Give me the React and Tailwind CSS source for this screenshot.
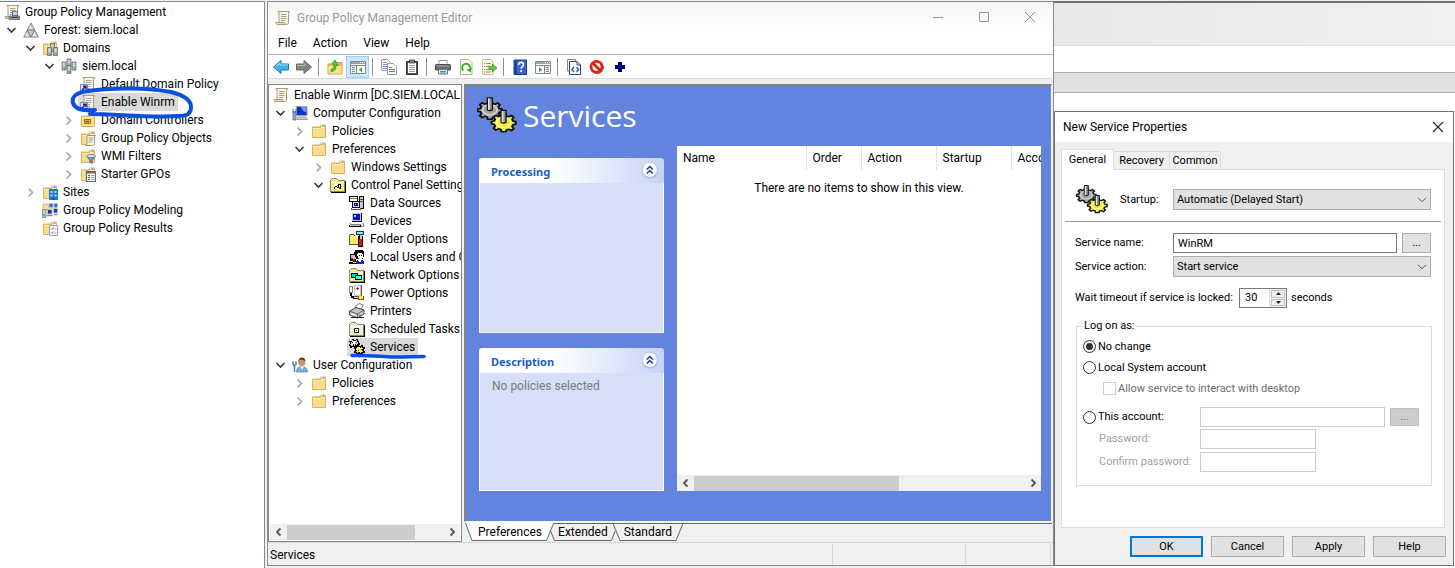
import React, { useState } from "react";

function Svg({ size = 16, box = 16, children, className = "", crisp = false }) {
  return (
    <svg
      width={size}
      height={size}
      viewBox={`0 0 ${box} ${box}`}
      className={`shrink-0 ${className}`}
      shapeRendering={crisp ? "crispEdges" : "auto"}
      fill="none"
      aria-hidden="true"
    >
      {children}
    </svg>
  );
}

/* ---------- tree icons ---------- */

const scrollShape = (
  <>
    <path d="M4 1.5h10.5c-.8.4-1 1-1 2V12c0 1.600-.5 2.500-2 2.500H2c1.300-.3 2-1 2-2.500V3c0-.8-.5-1.300-1.300-1.500z" fill="#fbf6e4" stroke="#a89c80" />
    <path d="M1 12.500h8.500c0 1 .5 1.800 1.500 2H2.500C1.500 14.500 1 13.700 1 12.500z" fill="#e9dcb4" stroke="#a89c80" />
    <path d="M6 4.500h5.500M6 6.500h5.500M6 8.500h5.500M6 10.500h4" stroke="#a8a294" />
    <path d="M13 2.500h2" stroke="#c9b67c" />
  </>
);

const ScrollIcon = () => <Svg>{scrollShape}</Svg>;

const ScrollLinkIcon = () => (
  <Svg>
    {scrollShape}
    <path d="M0 8h8v8H0z" fill="#e8ecff" />
    <path d="M.5 8.500h7v7h-7z" stroke="#7c8cc8" />
    <path d="M2 14l3.500-3.500M3 10.200h3v3" stroke="#10189c" strokeWidth="1.400" />
  </Svg>
);

const ConsoleIcon = () => (
  <Svg>
    {scrollShape}
    <path d="M8 7h6v5H8z" fill="#6d7f8f" />
    <path d="M9 8h4v3H9z" fill="#c7d4df" />
    <path d="M5 12h11v3.500H5z" fill="#8a949d" stroke="#4d565e" strokeWidth=".6" />
    <path d="M7 13.500h7" stroke="#3f474e" />
  </Svg>
);

const ForestIcon = () => (
  <Svg>
    <path d="M8 1l3.700 7H4.300zM4.300 8L8 15H.8zM11.700 8l3.600 7H8z" fill="#ececec" stroke="#777" strokeWidth=".9" strokeLinejoin="round" />
    <path d="M4.300 8h7.400L8 15z" fill="#c9c9c9" stroke="#777" strokeWidth=".9" strokeLinejoin="round" />
    <path d="M8 1l1 5.500L11.700 8M4.300 8l1 4.500L8 15M11.700 8l1 4.500 2.600 2.500" stroke="#999" strokeWidth=".6" />
  </Svg>
);

const folderShape = (
  <>
    <path d="M1 3.500h7.500l1-2H14c.5 0 1 .4 1 1V13H1z" fill="#e3bd63" />
    <path d="M10 2h4v1.500h-4z" fill="#fff" />
    <path d="M11.500 2h2v1h-2z" fill="#4a9be8" />
    <path d="M1 4h8.200l1-1H15v11.500H1z" fill="#fbdc8f" />
    <path d="M1.500 4.500h7.900l1-1h4.100v11h-13z" stroke="#dcb25a" />
    <path d="M2 5.500h7.600l1-1H14" stroke="#fff0c4" />
  </>
);

const FolderIcon = () => <Svg>{folderShape}</Svg>;

const server = (x, y) => (
  <>
    <path d={`M${x} ${y}h4v8h-4z`} fill="#a9b4ba" stroke="#566067" strokeWidth=".7" />
    <path d={`M${x + 0.8} ${y + 1.800}h2.400M${x + 0.8} ${y + 3.500}h2.400`} stroke="#eef2f4" strokeWidth=".9" />
    <path d={`M${x + 2} ${y + 5.800}h1.400v1.400h-1.400z`} fill="#25c425" />
  </>
);

const ServersIcon = () => (
  <Svg>
    {server(6, 1)}
    {server(1, 4)}
    {server(11, 4)}
    {server(6, 7.500)}
  </Svg>
);

const FolderServersIcon = () => (
  <Svg>
    {folderShape}
    {server(8.500, 3.500)}
    {server(5.500, 7.500)}
    {server(11.500, 7.500)}
  </Svg>
);

const FolderOuIcon = () => (
  <Svg>
    {folderShape}
    <path d="M4.500 7.500h6v4h-6z" fill="#d5a83c" stroke="#9c7317" />
    <path d="M6 9h3v1H6z" fill="#6d4f0c" />
  </Svg>
);

const FolderScrollIcon = () => (
  <Svg>
    {folderShape}
    <path d="M7 5.500h8.500c-.7.300-1 .7-1 1.500v6.500c0 1.200-.6 2-1.700 2H5.500c1-.3 1.500-.9 1.500-2z" fill="#fbf6e4" stroke="#988c6e" strokeWidth=".9" />
    <path d="M8.500 8h4.500M8.500 10h4.500M8.500 12h3.500" stroke="#a09a8a" />
  </Svg>
);

const FolderFilterIcon = () => (
  <Svg>
    {folderShape}
    <path d="M6.500 8.500h9l-3.300 3.500v3.500l-2.400-1.500v-2z" fill="#7f9bb8" stroke="#48607a" strokeWidth=".9" />
    <ellipse cx="11" cy="8" rx="4.500" ry="1.500" fill="#dfe8f1" stroke="#5b7189" strokeWidth=".8" />
  </Svg>
);

const FolderStarterIcon = () => (
  <Svg>
    {folderShape}
    <path d="M6.500 5.500h9v10h-9z" fill="#fff" stroke="#5b6a7c" strokeWidth="1.200" />
    <path d="M7 6h8v1.500H7z" fill="#a3563a" />
    <path d="M8 9.500h2M8 11.500h2M8 13.500h2" stroke="#3f5f9a" />
    <path d="M11 9.500h3.500M11 11.500h3.500M11 13.500h3.500" stroke="#9aa6b5" />
  </Svg>
);

const FolderSitesIcon = () => (
  <Svg>
    {folderShape}
    <path d="M7 5h9v11H7z" fill="#1b7ecb" />
    <path d="M8.500 7h2v2h-2zM12.500 7h2v2h-2zM8.500 10.500h2v2h-2zM12.500 10.500h2v2h-2z" fill="#9fdcff" />
    <path d="M10.500 13.500h2V16h-2z" fill="#0a4f8d" />
  </Svg>
);

const ModelingIcon = () => (
  <Svg>
    <path d="M1 2h5l1 1.500h3V8H1z" fill="#f3dc94" stroke="#cdb064" strokeWidth=".7" />
    <path d="M7 1.500h4v4H7zM12 1.500h3.500v4H12z" fill="#4460d0" stroke="#b9bfcc" />
    <path d="M5.500 7.500h4.500v4.500H5.500z" fill="#1c2fa8" stroke="#b9bfcc" />
    <path d="M11.500 6.500h4V11h-4z" fill="#2340b8" stroke="#b9bfcc" />
    <path d="M5 13.500h6M12 12.500h3.500" stroke="#8c939e" strokeWidth="1.400" />
    <path d="M.500 7.500h3.500v8H.5z" fill="#c6cbd0" stroke="#70767d" strokeWidth=".7" />
    <path d="M1.300 12.500h1.800v1.800H1.300z" fill="#1fc11f" />
  </Svg>
);

const ResultsIcon = () => (
  <Svg>
    {folderShape}
    <path d="M7.500 5.500h8v10h-8z" fill="#fff" stroke="#9ba3ad" />
    <path d="M9 8.500l1 1 1.800-2M9 12.500l1 1 1.800-2" stroke="#2764b8" />
    <path d="M12.500 9h2M12.500 13h2" stroke="#9ba3ad" />
  </Svg>
);

const ComputerIcon = () => (
  <Svg>
    <path d="M4.500 1.500h10.500v9H4.500z" fill="#1230c8" stroke="#9aa3b8" />
    <path d="M9 2h5.500v5c-3 0-4.500-2-5.500-5z" fill="#6e92f5" />
    <path d="M6 12h8l1.500 2.500H5z" fill="#c9ced6" stroke="#7b828d" strokeWidth=".7" />
    <path d="M1 6.500h3v8.500H1z" fill="#8faecb" stroke="#44617d" strokeWidth=".7" />
    <path d="M1 4v3l1.500 1L4 7V4" stroke="#68839d" strokeWidth="1.200" />
  </Svg>
);

const UserIcon = () => (
  <Svg>
    <path d="M4.500 15c0-4 2-5.500 5-5.500s6 1.500 6 5.500z" fill="#7eaede" stroke="#5481b0" strokeWidth=".7" />
    <path d="M8 9.500l2 3 2-3z" fill="#fff" />
    <circle cx="9.800" cy="5.500" r="3.500" fill="#c89266" />
    <path d="M6.300 5c0-3 1.500-4.500 3.700-4.500S13.700 2 13.400 5c-1-2-3-2.500-4.500-2.200C7.500 3 6.800 3.800 6.300 5z" fill="#5c3a22" />
    <path d="M1 4.500v3l1.500 1.200L4 7.500v-3M2.500 8.500V15" stroke="#5d7790" strokeWidth="1.500" />
  </Svg>
);

const retroFolder = (
  <>
    <path d="M1 3h1V2h5v1h1v1h8v12H1z" fill="#000" />
    <path d="M0 3h1V2h1V1h5v1h1v1h7v12H0z" fill="#848484" />
    <path d="M1 3h1V2h5v1h1v1h6v10H1z" fill="#f3ee74" />
    <path d="M1 5h13v1H1z" fill="#fffde0" />
  </>
);

const ControlPanelIcon = () => (
  <Svg crisp>
    {retroFolder}
    <path d="M4 7h7v5H4z" fill="#fff" />
    <path d="M4 10h1v2H4zM5 9h2v1H5zM7 10h1v1H7zM8 7h3v1H8zM8 8h1v3H8zM10 8h1v4h-1z" fill="#000" />
    <path d="M7 8h1v1H7zM9 10h1v2H9z" fill="#e22" />
  </Svg>
);

const DataSourcesIcon = () => (
  <Svg crisp>
    <path d="M0 1h9v6H0z" fill="#000" />
    <path d="M1 2h7v4H1z" fill="#fff" />
    <path d="M1 3h7v1H1z" fill="#848484" />
    <path d="M10 1h5v13h-5z" fill="#000" />
    <path d="M11 2h3v11h-3z" fill="#c6c6c6" />
    <path d="M11 4h3v1h-3zM11 6h3v1h-3z" fill="#555" />
    <path d="M3 6h8v7H3z" fill="#000" />
    <path d="M4 7h6v5H4z" fill="#d8d8d8" />
    <path d="M5 8h4v3H5z" fill="#0010c0" />
    <path d="M6 9h1v1H6z" fill="#0ff" />
    <path d="M2 13h10v2H2z" fill="#555" />
    <path d="M3 13h8v1H3z" fill="#fff" />
  </Svg>
);

const DevicesIcon = () => (
  <Svg crisp>
    <path d="M3 0h10v9H3z" fill="#000" />
    <path d="M3 0h9v8H3z" fill="#c6c6c6" />
    <path d="M4 1h7v6H4z" fill="#0010c8" />
    <path d="M5 2h2v2H5z" fill="#7fd4ff" />
    <path d="M1 10h13v2H1z" fill="#848484" />
    <path d="M2 9h11v2H2z" fill="#fff" />
    <path d="M0 12h14v2H0z" fill="#000" />
    <path d="M1 12h10v1H1z" fill="#c6c6c6" />
    <path d="M12 10h3v4h-3z" fill="#848484" />
    <path d="M12 10h2v3h-2z" fill="#e6e6e6" />
  </Svg>
);

const FolderOptionsIcon = () => (
  <Svg crisp>
    <path d="M0 4h1V3h4v1h1v1h8v9H0z" fill="#555" />
    <path d="M1 4h4v1h8v8H1z" fill="#ffee4a" />
    <path d="M1 6h9v1H1z" fill="#fffbd0" />
    <path d="M7 0h8v4h-2v1h-3V4H7z" fill="#333" />
    <path d="M8 1h6v2H8z" fill="#8ee6ff" />
    <path d="M9 5h5v11H9z" fill="#000" />
    <path d="M11 4h2v4h-2z" fill="#c6c6c6" />
    <path d="M10 8h3v7h-3z" fill="#e01010" />
  </Svg>
);

const UsersIcon = () => (
  <Svg crisp>
    <path d="M1 5h6v9H1z" fill="#000" />
    <path d="M2 6h5v4H2z" fill="#c6c6c6" />
    <path d="M2 9h2v1H2zM4 10h2v2H4z" fill="#d81818" />
    <path d="M0 13h8v2H0z" fill="#000" />
    <path d="M1 12h3v1H1zM4 13h3v1H4z" fill="#ffe800" />
    <path d="M6 1h8v1h1v6h-1v2H7V8H6V6H5V3h1z" fill="#000" />
    <path d="M9 4h4v1h1v4h-1v1h-3V9H9V7H8V5h1z" fill="#fff" />
    <path d="M10 6h1v1h-1zM12 6h1v1h-1z" fill="#000" />
    <path d="M8 11h6v1h1v3H7v-3h1z" fill="#1420b8" />
    <path d="M9 10h3v3h-2z" fill="#fff" />
  </Svg>
);

const NetworkIcon = () => (
  <Svg crisp>
    {retroFolder}
    <path d="M2 6h7v5H2z" fill="#000" />
    <path d="M3 7h5v3H3z" fill="#00d8d8" />
    <path d="M6 8h7v5H6z" fill="#000" />
    <path d="M7 9h5v3H7z" fill="#4ff" />
  </Svg>
);

const PowerIcon = () => (
  <Svg crisp>
    <path d="M5 0h8v12H5z" fill="#555" />
    <path d="M5 0h7v11H5z" fill="#c6c6c6" />
    <path d="M6 1h5v9H6z" fill="#fff" />
    <path d="M8 2h1v3H8zM7 3h3v1H7z" fill="#e01010" />
    <path d="M0 1h4v7H0z" fill="#848484" />
    <path d="M1 2h2v5H1z" fill="#fff" />
    <path d="M1 8h2v3h2v2h4v1H4v-1H2v-2H1z" fill="#000" />
    <path d="M9 11h6v4H9z" fill="#6a6400" />
    <path d="M10 11h4v3h-4z" fill="#ffe84a" />
  </Svg>
);

const PrinterFolderIcon = () => (
  <Svg>
    <path d="M6 4l4-3.500 4.500 1.500-3 5z" fill="#fff" stroke="#555" strokeWidth=".8" />
    <path d="M.5 8L7 4.500l8 2.500v4l-6.500 4-8-3z" fill="#c6c6c6" stroke="#333" strokeWidth=".9" />
    <path d="M.5 8l8 3 6.500-4M8.500 11v4" stroke="#555" strokeWidth=".9" />
    <path d="M2 10.800l4.500 1.700" stroke="#fff" />
    <path d="M10 12.500h2" stroke="#2a2" />
    <path d="M2 14.500h13" stroke="#222" />
  </Svg>
);

const ScheduledIcon = () => (
  <Svg crisp>
    <path d="M1 3h1V2h5v1h1v1h8v12H1z" fill="#000" />
    <path d="M0 3h1V2h1V1h5v1h1v1h7v12H0z" fill="#848484" />
    <path d="M1 3h1V2h5v1h1v1h6v10H1z" fill="#f1eed2" />
    <path d="M1 5h13v1H1z" fill="#fff" />
    <path d="M5 7h5v5H5z" fill="#223" />
    <path d="M6 8h3v3H6z" fill="#fff" />
    <path d="M7 9h1v1H7z" fill="#b02020" />
  </Svg>
);

const gearPath =
  "M8 1h4l.5 2.500 2.200.8L17 2.800 19.200 5l-1.500 2.200.8 2 2.500.5v3l-2.500.6-.8 2 1.500 2.200-2.200 2.200-2.300-1.500-2.200.8L12 21H8l-.5-2.500-2.200-.8L3 19.200.8 17l1.500-2.200-.8-2L-1 12V9.500l2.500-.5.8-2L.8 4.800 3 2.600l2.300 1.500 2.200-.8z";

const gear = (tx, ty, fill, light) => (
  <g transform={`translate(${tx} ${ty})`}>
    <g transform="scale(.88 .72)">
      <path d={gearPath} fill={fill} stroke="#111" strokeWidth="1.800" strokeLinejoin="round" />
      <ellipse cx="10" cy="10.500" rx="6.500" ry="5.500" stroke={light} strokeWidth="1.400" />
    </g>
    <path d="M6.800-2h4v9.500c-1 .9-3 .9-4 0z" fill="#8e8e8e" stroke="#111" strokeWidth="1" />
    <path d="M7.300-1.500h1.300v9H7.300z" fill="#e6e6e6" />
  </g>
);

const GearsIcon = ({ size = 32 }) => (
  <Svg size={size} box={32}>
    {gear(1.500, 3.500, "#a4a4a4", "#d6d6d6")}
    {gear(12.500, 13.500, "#f0e93c", "#fffcb0")}
  </Svg>
);

const ServicesSmallIcon = () => (
  <Svg crisp>
    <path d="M3 0h2v1h2V0h2v2h1v2h1v2H9v2H7v1H5V8H3v1H1V7H0V5h1V3H0V2h3z" fill="#000" />
    <path d="M3 1h1v1h3V1h1v2h1v2H8v1H6v1H5V6H4v1H2V6H1V5h1V3h1z" fill="#d2d2d2" />
    <path d="M3 3h1v1H3zM6 5h1v1H6zM4 5h1v1H4zM7 3h1v1H7z" fill="#333" />
    <path d="M4 2h2v3H4z" fill="#fff" />
    <path d="M8 6h2v1h2V6h2v2h2v2h-1v2h1v2h-2v1h-2v1h-2v-1H9v1H7v-2H5v-2h1v-2H5V8h3z" fill="#000" />
    <path d="M8 8h2v1h2V8h1v1h1v1h-1v2h1v1h-2v1h-1v-1H9v1H8v-1H7v-1h1v-1H7V9h1z" fill="#f5ee3c" />
    <path d="M10 8h1v3h-1z" fill="#fff" />
    <path d="M9 11h1v1H9zM12 10h1v1h-1z" fill="#333" />
  </Svg>
);

/* ---------- toolbar icons ---------- */

const BackIcon = () => (
  <Svg>
    <path d="M.5 8L8 1.500v3.500H15.500v6H8V14.500z" fill="#3fb0ee" stroke="#1b72b5" strokeLinejoin="round" />
    <path d="M2.500 7.500L7 3.800v2.200h8" stroke="#a5def9" />
  </Svg>
);
const ForwardIcon = () => (
  <Svg>
    <path d="M15.500 8L8 1.500v3.500H.5v6H8V14.500z" fill="#858585" stroke="#666" strokeLinejoin="round" />
    <path d="M1 6.500h8V4" stroke="#bdbdbd" />
  </Svg>
);
const FolderUpIcon = () => (
  <Svg>
    <path d="M1 5h6l1.500-1.500H15V15H1z" fill="#e9c25f" stroke="#c9a34c" />
    <path d="M1.500 7h13v7.500h-13z" fill="#fbdf92" />
    <path d="M4 12.500c3.500 0 5-2 5-6h2.200L8 1 4.800 4.500 7 5.500c0 3-1 4.500-3 5z" fill="#4fc92f" stroke="#2d8d18" strokeWidth=".7" />
  </Svg>
);
const panelFrame = (
  <>
    <path d="M.5 2.500h15v12H.5z" fill="#fff" stroke="#7d8792" />
    <path d="M1 3h14v2H1z" fill="#9aa6b3" />
    <path d="M10 3.500h1M12 3.500h1M14 3.500h.8" stroke="#fff" />
    <path d="M1 6.500h14" stroke="#7d8792" />
  </>
);
const TreePaneIcon = () => (
  <Svg>
    {panelFrame}
    <path d="M6.500 7v7M2 8.500h3M2 10.500h3M2 12.500h3" stroke="#6c86ad" />
    <path d="M12 8v5.500L8.800 10.700z" fill="#37b524" />
  </Svg>
);
const ActionPaneIcon = () => (
  <Svg>
    {panelFrame}
    <path d="M9.500 7v7M11 8.500h3M11 10.500h3M11 12.500h3" stroke="#6c86ad" />
    <path d="M4 8v5.500l3.200-2.800z" fill="#37b524" />
  </Svg>
);
const CopyIcon = () => (
  <Svg>
    <path d="M.5.500h6l3 3v8h-9z" fill="#fff" stroke="#9a9fa6" />
    <path d="M2 3.500h3.500M2 5.500h5M2 7.500h5M2 9.500h4" stroke="#7291c2" />
    <path d="M6.500 4.500h5.500l3.500 3v8h-9z" fill="#fff" stroke="#9a9fa6" />
    <path d="M8 8.500h3M8 10.500h6M8 12.500h6" stroke="#5779b5" />
  </Svg>
);
const ClipboardIcon = () => (
  <Svg>
    <path d="M2.500 2.500h11v13h-11z" fill="#555" stroke="#333" />
    <path d="M4 4h8v10H4z" fill="#fff" />
    <path d="M5.500 1h5v3h-5z" fill="#888" stroke="#333" strokeWidth=".8" />
    <path d="M5 6.500h6M5 8.500h6M5 10.500h6M5 12.500h6" stroke="#999" />
  </Svg>
);
const PrintIcon = () => (
  <Svg>
    <path d="M4 1.500h8V6H4z" fill="#fff" stroke="#999" />
    <path d="M1.500 5.500h13c.6 0 1 .4 1 1V11H.5V6.500c0-.6.400-1 1-1z" fill="#6b6f74" stroke="#4a4d51" />
    <path d="M2 7h12" stroke="#a4a8ac" />
    <path d="M3.500 10.500h9v4.500h-9z" fill="#dff0fa" stroke="#777" />
    <path d="M5 12.500h6M5 14h6" stroke="#3c8fc7" />
  </Svg>
);
const RefreshDocIcon = () => (
  <Svg>
    <path d="M2.500.500h8.500l3 3v12H2.500z" fill="#fdfdf4" stroke="#b5b49c" />
    <path d="M5.200 11.500A4 4 0 1 1 12 9.500" stroke="#35b12a" strokeWidth="2" />
    <path d="M14 9l-1.500 4.500L8.500 10.500z" fill="#35b12a" />
  </Svg>
);
const ExportIcon = () => (
  <Svg>
    <path d="M1.500.500h8.500l2 2.500v12.500H1.500z" fill="#fdf8d8" stroke="#c4bf94" />
    <path d="M3 4.500h1M5 4.500h5M3 7.500h1M5 7.500h3M3 10.500h1M5 10.500h3M3 13h1M5 13h5" stroke="#888" />
    <path d="M8 7.500h3.500V5L16 9l-4.500 4v-2.500H8z" fill="#62cf3a" stroke="#38951d" strokeWidth=".7" />
  </Svg>
);
const HelpIcon = () => (
  <Svg>
    <path d="M2 1h12.500v14.500H2z" fill="#3a5fd0" stroke="#1d3a92" />
    <path d="M2.500 1.500h2v13.500h-2z" fill="#1d3a92" />
    <path d="M6.500 6c0-1.800 1-2.700 2.500-2.700s2.500.9 2.500 2.200c0 2-2.300 2-2.300 4.200" stroke="#fff" strokeWidth="1.700" />
    <circle cx="9.200" cy="12.200" r="1.100" fill="#fff" />
  </Svg>
);
const CodeDocIcon = () => (
  <Svg>
    <path d="M1.500.500h8v2H4v9.500H1.500z" fill="#fff" stroke="#7d8792" />
    <path d="M3.500 2.500H11l3.500 3.500v9.500h-11z" fill="#fff" stroke="#2c4a6e" />
    <path d="M11 2.500V6h3.500" stroke="#2c4a6e" />
    <path d="M8 8L5.800 10.500 8 13M10.500 8l2.200 2.500-2.200 2.500" stroke="#2d4fb5" strokeWidth="1.300" />
  </Svg>
);
const StopIcon = () => (
  <Svg>
    <circle cx="8.500" cy="8.500" r="6.500" fill="#8e8e8e" />
    <circle cx="7.500" cy="7.800" r="5.500" fill="#fff" stroke="#e3200e" strokeWidth="2.800" />
    <path d="M3.800 4l7.500 7.500" stroke="#e3200e" strokeWidth="2.800" />
  </Svg>
);
const PlusIcon = () => (
  <Svg crisp>
    <path d="M6 3h4v3h3v4h-3v3H6v-3H3V6h3z" fill="#000080" />
  </Svg>
);

/* ---------- small shared pieces ---------- */

function Chevron({ open }) {
  return (
    <Svg>
      {open ? (
        <path d="M3.500 6l4 4 4-4" stroke="#3c3c3c" strokeWidth="1.700" />
      ) : (
        <path d="M5.500 4.500l4 4-4 4" stroke="#a6a6a6" strokeWidth="1.700" />
      )}
    </Svg>
  );
}

const indents = ["pl-1", "pl-1", "pl-[23px]", "pl-[42px]", "pl-[61px]"];

function TreeRow({ level, icon: Icon, label, state, selected, children }) {
  return (
    <li className={`relative flex h-[18px] items-center whitespace-nowrap ${indents[level]}`}>
      {level > 0 && (
        <span className="mr-[3px] flex w-4 shrink-0">{state && <Chevron open={state === "open"} />}</span>
      )}
      <span className={`-ml-0.5 flex h-[18px] items-center gap-[5px] pr-[3px] pl-0.5 ${selected ? "bg-[#d9d9d9]" : ""}`}>
        <Icon />
        <span>{label}</span>
      </span>
      {children}
    </li>
  );
}

function ScrollBar({ thumb }) {
  return (
    <div className="flex h-4 shrink-0 items-center bg-[#f0f0f0]">
      <button type="button" aria-label="Scroll left" className="flex w-[17px] justify-center">
        <Svg><path d="M9.500 4.500L6 8l3.500 3.500" stroke="#555" strokeWidth="1.800" /></Svg>
      </button>
      <div className="h-[15px] flex-1">
        <div className={`h-full bg-[#cdcdcd] ${thumb}`} />
      </div>
      <button type="button" aria-label="Scroll right" className="flex w-[17px] justify-center">
        <Svg><path d="M6.500 4.500L10 8l-3.500 3.500" stroke="#555" strokeWidth="1.800" /></Svg>
      </button>
    </div>
  );
}

/* ---------- left console tree ---------- */

const consoleTree = [
  { level: 0, icon: ConsoleIcon, label: "Group Policy Management" },
  { level: 1, icon: ForestIcon, label: "Forest: siem.local", state: "open" },
  { level: 2, icon: FolderServersIcon, label: "Domains", state: "open" },
  { level: 3, icon: ServersIcon, label: "siem.local", state: "open" },
  { level: 4, icon: ScrollLinkIcon, label: "Default Domain Policy" },
  { level: 4, icon: ScrollLinkIcon, label: "Enable Winrm", selected: true, circled: true },
  { level: 4, icon: FolderOuIcon, label: "Domain Controllers", state: "closed" },
  { level: 4, icon: FolderScrollIcon, label: "Group Policy Objects", state: "closed" },
  { level: 4, icon: FolderFilterIcon, label: "WMI Filters", state: "closed" },
  { level: 4, icon: FolderStarterIcon, label: "Starter GPOs", state: "closed" },
  { level: 2, icon: FolderSitesIcon, label: "Sites", state: "closed" },
  { level: 2, icon: ModelingIcon, label: "Group Policy Modeling" },
  { level: 2, icon: ResultsIcon, label: "Group Policy Results" },
];

function ConsoleTree() {
  return (
    <nav className="w-[265px] shrink-0 border-t border-r border-[#828790] bg-white pt-px">
      <ul>
        {consoleTree.map(({ circled, ...row }) => (
          <TreeRow key={row.label} {...row}>
            {circled && (
              <svg className="pointer-events-none absolute -top-2 left-[68px] z-10" width="128" height="36" viewBox="0 0 128 36" fill="none" aria-hidden="true">
                <path
                  d="M27 25C16 26 7 24 5 18C3 11 10 7 20 6C45 2 82 3 103 7C115 10 123 15 123 22C123 29 119 31 110 31C80 33 50 29 22 29"
                  stroke="#0a4fe0"
                  strokeWidth="4"
                  strokeLinecap="round"
                  strokeLinejoin="round"
                />
              </svg>
            )}
          </TreeRow>
        ))}
      </ul>
    </nav>
  );
}

/* ---------- editor window ---------- */

const editorTree = [
  { level: 0, icon: ScrollIcon, label: "Enable Winrm [DC.SIEM.LOCAL" },
  { level: 1, icon: ComputerIcon, label: "Computer Configuration", state: "open" },
  { level: 2, icon: FolderIcon, label: "Policies", state: "closed" },
  { level: 2, icon: FolderIcon, label: "Preferences", state: "open" },
  { level: 3, icon: FolderIcon, label: "Windows Settings", state: "closed" },
  { level: 3, icon: ControlPanelIcon, label: "Control Panel Settings", state: "open" },
  { level: 4, icon: DataSourcesIcon, label: "Data Sources" },
  { level: 4, icon: DevicesIcon, label: "Devices" },
  { level: 4, icon: FolderOptionsIcon, label: "Folder Options" },
  { level: 4, icon: UsersIcon, label: "Local Users and Groups" },
  { level: 4, icon: NetworkIcon, label: "Network Options" },
  { level: 4, icon: PowerIcon, label: "Power Options" },
  { level: 4, icon: PrinterFolderIcon, label: "Printers" },
  { level: 4, icon: ScheduledIcon, label: "Scheduled Tasks" },
  { level: 4, icon: ServicesSmallIcon, label: "Services", selected: true, underlined: true },
  { level: 1, icon: UserIcon, label: "User Configuration", state: "open" },
  { level: 2, icon: FolderIcon, label: "Policies", state: "closed" },
  { level: 2, icon: FolderIcon, label: "Preferences", state: "closed" },
];

const toolbar = [
  [["Back", BackIcon], ["Forward", ForwardIcon]],
  [["Up one level", FolderUpIcon], ["Show tree", TreePaneIcon, true]],
  [["Copy", CopyIcon], ["Paste", ClipboardIcon]],
  [["Print", PrintIcon], ["Refresh", RefreshDocIcon], ["Export list", ExportIcon]],
  [["Help", HelpIcon], ["Show action pane", ActionPaneIcon]],
  [["View XML", CodeDocIcon], ["Disable", StopIcon], ["Add", PlusIcon]],
];

function TaskPanel({ title, grow, children }) {
  return (
    <section className={`flex min-h-0 flex-col overflow-hidden rounded-t-[3px] ${grow}`}>
      <header className="flex h-[25px] shrink-0 items-center justify-between bg-linear-to-r from-white from-40% to-[#c6d3f7] pr-[5px] pb-0.5 pl-3">
        <h2 className="pt-1 font-['Noto_Sans',sans-serif] text-[11px] leading-4 font-bold text-[#215dc6]">
          {title}
        </h2>
        <button type="button" aria-label={`Collapse ${title}`}>
          <Svg size={18} box={18}>
            <circle cx="9" cy="9.500" r="8" fill="#a9b8e0" />
            <circle cx="8.800" cy="8.800" r="7.500" fill="#fff" stroke="#bcc6e0" />
            <path d="M5.800 8.500l3-3 3 3M5.800 12.500l3-3 3 3" stroke="#0e3fa0" strokeWidth="1.500" />
          </Svg>
        </button>
      </header>
      <div className="flex-1 border border-t-0 border-white bg-[#d6dff7] px-3 pt-1 text-[12px] leading-[18px] text-[#7a7a7a]">
        {children}
      </div>
    </section>
  );
}

const columns = [
  ["Name", "w-[129px]"],
  ["Order", "w-[55px]"],
  ["Action", "w-[75px]"],
  ["Startup", "w-[75px]"],
  ["Account", "w-20"],
];

function ItemList() {
  return (
    <div className="flex min-w-0 flex-1 flex-col bg-white">
      <div className="min-h-0 flex-1 overflow-hidden">
        <table className="w-[414px] table-fixed border-collapse text-left">
          <thead>
            <tr className="h-6">
              {columns.map(([name, width]) => (
                <th key={name} scope="col" className={`border-r border-[#e3e3e3] pl-1.5 font-normal ${width}`}>
                  {name}
                </th>
              ))}
            </tr>
          </thead>
        </table>
        <p className="pt-[9px] text-center leading-[18px]">There are no items to show in this view.</p>
      </div>
      <ScrollBar thumb="w-[62%]" />
    </div>
  );
}

function SheetTabs() {
  return (
    <div role="tablist" className="flex h-5 shrink-0 items-start">
      <svg width="13" height="20" className="shrink-0" aria-hidden="true">
        <path d="M1 0h12v19H8z" fill="#fff" />
        <path d="M1.500 1l6.500 17.500h5" stroke="#666" fill="none" />
      </svg>
      <button type="button" role="tab" aria-selected="true" className="h-[19px] border-b border-[#666] bg-white px-px pt-0.5">
        Preferences
      </button>
      <svg width="14" height="20" className="shrink-0" aria-hidden="true">
        <path d="M0 0h11L4 19H0z" fill="#fff" />
        <path d="M0 18.500h3.500L10.500 1.500H14M7.500 9l4 9.500H14" stroke="#666" fill="none" />
      </svg>
      <button type="button" role="tab" aria-selected="false" className="h-[19px] border-b border-[#666] px-px pt-0.5 shadow-[inset_0_1px_#f0f0f0,inset_0_2px_#666]">
        Extended
      </button>
      <svg width="14" height="20" className="shrink-0" aria-hidden="true">
        <path d="M0 1.500h14M0 18.500h2.500L6 9M4 1.500l7 17h3" stroke="#666" fill="none" />
      </svg>
      <button type="button" role="tab" aria-selected="false" className="h-[19px] border-b border-[#666] px-px pt-0.5 shadow-[inset_0_1px_#f0f0f0,inset_0_2px_#666]">
        Standard
      </button>
      <svg width="14" height="20" className="shrink-0" aria-hidden="true">
        <path d="M0 1.500h14M0 18.500h3L10 1.500" stroke="#666" fill="none" />
      </svg>
      <div className="h-0.5 flex-1 border-b border-[#666]" />
    </div>
  );
}

function EditorWindow() {
  return (
    <section className="mb-0.5 ml-0.5 flex min-w-0 flex-1 flex-col border border-[#8b8b8b] bg-[#f0f0f0]">
      <header className="flex h-8 shrink-0 items-center justify-between bg-linear-to-b from-[#f6f6f6] to-white text-[#999]">
        <h1 className="flex items-center gap-1.5 pl-[7px] font-normal">
          <ScrollIcon />
          Group Policy Management Editor
        </h1>
        <div className="flex">
          <button type="button" aria-label="Minimize" className="flex w-[46px] justify-center">
            <Svg><path d="M3 7.500h10" stroke="#999" /></Svg>
          </button>
          <button type="button" aria-label="Maximize" className="flex w-[46px] justify-center">
            <Svg><path d="M3.500 2.500h9v9h-9z" stroke="#999" /></Svg>
          </button>
          <button type="button" aria-label="Close" className="flex w-[46px] justify-center">
            <Svg><path d="M3 2l10 10M13 2L3 12" stroke="#999" /></Svg>
          </button>
        </div>
      </header>
      <nav className="flex h-[21px] shrink-0 items-center gap-4 border-b border-[#b4b4b4] bg-white pb-0.5 pl-2.5">
        {["File", "Action", "View", "Help"].map((item) => (
          <button key={item} type="button">{item}</button>
        ))}
      </nav>
      <div className="flex h-6 shrink-0 items-center border-b border-[#dadada] bg-white pl-px">
        {toolbar.map((group, i) => (
          <React.Fragment key={i}>
            {i > 0 && <span className="mr-1 ml-[3px] h-[18px] w-px bg-[#8f8f8f]" />}
            {group.map(([name, Icon, active]) => (
              <button
                key={name}
                type="button"
                aria-label={name}
                className={`flex h-[22px] w-[23px] items-center justify-center ${active ? "border border-[#99d1ff] bg-[#cce8ff]" : ""}`}
              >
                <Icon />
              </button>
            ))}
          </React.Fragment>
        ))}
      </div>

      <div className="flex min-h-0 flex-1 gap-0.5 pt-[5px] pr-px">
        <div className="flex w-[194px] shrink-0 flex-col border border-[#828790] bg-white">
          <ul className="flex-1 overflow-hidden pt-px">
            {editorTree.map(({ underlined, ...row }, i) => (
              <TreeRow key={i} {...row}>
                {underlined && (
                  <svg className="pointer-events-none absolute top-3.5 left-20 z-10" width="80" height="8" viewBox="0 0 80 8" fill="none" aria-hidden="true">
                    <path d="M3 3.500C20 3 30 4.500 45 5C58 5 66 4.500 75 4.500" stroke="#0a4fe0" strokeWidth="3.500" strokeLinecap="round" />
                  </svg>
                )}
              </TreeRow>
            ))}
          </ul>
          <div className="px-px pb-px">
            <ScrollBar thumb="w-[82%]" />
          </div>
        </div>

        <div className="flex min-w-0 flex-1 flex-col">
          <div className="flex min-h-0 flex-1 flex-col border-t-2 border-r border-b border-l-2 border-t-[#828282] border-r-[#f8f8f8] border-b-[#f8f8f8] border-l-[#828282] bg-[#6284de] pr-2.5 pb-[30px] pl-[13px]">
            <div className="-ml-0.5 flex h-[60px] shrink-0 items-center gap-1.5">
              <GearsIcon size={40} />
              <h2 className="font-['Open_Sans',sans-serif] text-[30px] leading-9 text-white">Services</h2>
            </div>
            <div className="flex min-h-0 flex-1 gap-[13px]">
              <div className="flex w-[185px] shrink-0 flex-col gap-[15px] pt-3">
                <TaskPanel title="Processing" grow="grow-[175] basis-0" />
                <TaskPanel title="Description" grow="grow-[143] basis-0">No policies selected</TaskPanel>
              </div>
              <ItemList />
            </div>
          </div>
          <SheetTabs />
        </div>
      </div>

      <footer className="flex h-[23px] shrink-0 items-center border-t border-[#d7d7d7] pr-0.5">
        <span className="flex-1 pt-0.5 pl-0.5">Services</span>
        <span className="h-5 w-[133px] border-l border-[#d7d7d7]" />
        <span className="h-5 w-[86px] border-x border-[#d7d7d7]" />
      </footer>
    </section>
  );
}

/* ---------- properties dialog ---------- */

function Dropdown({ id, options }) {
  return (
    <div className="relative flex-1">
      <select id={id} className="h-[21px] w-full appearance-none border border-[#adadad] bg-[#e1e1e1] pl-[3px]">
        {options.map((option) => (
          <option key={option}>{option}</option>
        ))}
      </select>
      <svg className="pointer-events-none absolute top-2 right-1" width="10" height="6" viewBox="0 0 10 6" fill="none" aria-hidden="true">
        <path d="M1 .8l4 4 4-4" stroke="#555" />
      </svg>
    </div>
  );
}

const radioClass =
  "size-[13px] shrink-0 appearance-none rounded-full border border-[#333] bg-white checked:border-[3px] checked:border-white checked:bg-[#333] checked:outline checked:-outline-offset-1 checked:outline-[#333]";

function ServiceDialog() {
  const [account, setAccount] = useState("none");
  return (
    <section
      role="dialog"
      aria-labelledby="dialog-title"
      className="mr-px flex min-h-0 flex-1 flex-col border border-[#707070] bg-[#f0f0f0] text-[11px]"
    >
      <header className="flex h-[30px] shrink-0 items-center justify-between bg-white pr-[7px] pl-2">
        <h2 id="dialog-title" className="text-[12px]">New Service Properties</h2>
        <button type="button" aria-label="Close">
          <Svg><path d="M3 3l10 10M13 3L3 13" stroke="#222" strokeWidth="1.100" /></Svg>
        </button>
      </header>

      <div className="flex min-h-0 flex-1 flex-col pt-[7px] pr-[7px] pb-2 pl-1.5">
        <div role="tablist" className="flex shrink-0 items-end">
          <button type="button" role="tab" aria-selected="true" className="z-10 -mb-px h-[21px] w-[53px] border border-b-0 border-[#dcdcdc] bg-white">
            General
          </button>
          <button type="button" role="tab" aria-selected="false" className="h-[18px] w-14 border border-b-0 border-l-0 border-[#dcdcdc]">
            Recovery
          </button>
          <button type="button" role="tab" aria-selected="false" className="h-[18px] w-[51px] border border-b-0 border-l-0 border-[#dcdcdc]">
            Common
          </button>
        </div>

        <form className="mr-px flex min-h-0 flex-1 flex-col border border-[#dcdcdc] bg-white" onSubmit={(e) => e.preventDefault()}>
          <div className="mx-[3px] flex h-[52px] shrink-0 items-center border-b border-[#a0a0a0] pt-2 pr-2.5 pl-[11px]">
            <GearsIcon size={32} />
            <label htmlFor="startup" className="ml-3 w-[53px] shrink-0">Startup:</label>
            <Dropdown id="startup" options={["Automatic (Delayed Start)", "Automatic", "Manual", "Disabled"]} />
          </div>

          <div className="flex flex-col px-[13px] pt-[11px]">
            <div className="flex h-5 items-center">
              <label htmlFor="service-name" className="w-[98px] shrink-0">Service name:</label>
              <input id="service-name" type="text" defaultValue="WinRM" className="h-5 min-w-0 flex-1 border border-[#7a7a7a] bg-white px-1" />
              <button type="button" aria-label="Browse services" className="ml-[5px] h-5 w-[29px] border border-[#adadad] bg-[#e1e1e1]">...</button>
            </div>
            <div className="mt-[3px] flex items-center">
              <label htmlFor="service-action" className="w-[98px] shrink-0">Service action:</label>
              <Dropdown id="service-action" options={["Start service", "Stop service", "Restart service", "No change"]} />
            </div>
            <div className="mt-[11px] flex h-5 items-center">
              <label htmlFor="timeout" className="w-[164px] whitespace-nowrap">Wait timeout if service is locked:</label>
              <span className="flex h-5 w-12 border border-[#7a7a7a]">
                <input id="timeout" type="text" inputMode="numeric" defaultValue="30" className="w-[29px] bg-white pl-[5px]" />
                <span className="flex flex-1 flex-col gap-px border-l border-[#e0e0e0] bg-[#f0f0f0] p-px">
                  <button type="button" aria-label="Increase" className="flex flex-1 items-center justify-center border border-[#c4c4c4]">
                    <svg width="5" height="3" aria-hidden="true"><path d="M0 3l2.500-3L5 3z" fill="#222" /></svg>
                  </button>
                  <button type="button" aria-label="Decrease" className="flex flex-1 items-center justify-center border border-[#c4c4c4]">
                    <svg width="5" height="3" aria-hidden="true"><path d="M0 0l2.500 3L5 0z" fill="#222" /></svg>
                  </button>
                </span>
              </span>
              <span className="pl-1">seconds</span>
            </div>
          </div>

          <fieldset className="mt-2.5 mr-3 ml-[14px] h-[168px] min-w-0 border border-[#dcdcdc] pt-0.5 pr-3 pl-1.5">
            <legend className="px-px leading-4">Log on as:</legend>
            <div className="flex h-[21px] items-center">
              <input id="no-change" type="radio" name="account" checked={account === "none"} onChange={() => setAccount("none")} className={radioClass} />
              <label htmlFor="no-change" className="pl-0.5">No change</label>
            </div>
            <div className="flex h-[21px] items-center">
              <input id="local-system" type="radio" name="account" checked={account === "system"} onChange={() => setAccount("system")} className={radioClass} />
              <label htmlFor="local-system" className="pl-0.5">Local System account</label>
            </div>
            <div className="flex h-[21px] items-center pl-5">
              <input id="interact" type="checkbox" disabled className="size-[13px] appearance-none border border-[#ccc] bg-white" />
              <label htmlFor="interact" className="pl-0.5 text-[#6d6d6d]">Allow service to interact with desktop</label>
            </div>
            <div className="mt-2 flex h-5 items-center">
              <input id="this-account" type="radio" name="account" checked={account === "this"} onChange={() => setAccount("this")} className={radioClass} />
              <label htmlFor="this-account" className="w-[104px] shrink-0 pl-0.5">This account:</label>
              <input type="text" disabled aria-label="Account name" className="h-5 min-w-0 flex-1 border border-[#ccc] bg-white" />
              <button type="button" disabled aria-label="Browse accounts" className="ml-[5px] h-[18px] w-[29px] border border-[#bfbfbf] bg-[#ccc] text-[#838383]">...</button>
            </div>
            <div className="mt-0.5 flex h-5 items-center">
              <label htmlFor="password" className="w-[117px] pl-4 text-[#a0a0a0]">Password:</label>
              <input id="password" type="password" disabled className="h-5 w-[116px] border border-[#ccc] bg-white" />
            </div>
            <div className="mt-[3px] flex h-5 items-center">
              <label htmlFor="confirm" className="w-[117px] pl-4 whitespace-nowrap text-[#a0a0a0]">Confirm password:</label>
              <input id="confirm" type="password" disabled className="h-5 w-[116px] border border-[#ccc] bg-white" />
            </div>
          </fieldset>
        </form>

        <div className="mt-2 flex shrink-0 justify-end gap-2">
          <button type="button" className="h-[21px] w-[73px] border-2 border-[#0078d7] bg-[#e1e1e1]">OK</button>
          {["Cancel", "Apply", "Help"].map((name) => (
            <button key={name} type="button" className="h-[21px] w-[73px] border border-[#adadad] bg-[#e1e1e1]">{name}</button>
          ))}
        </div>
      </div>
    </section>
  );
}

export default function App() {
  return (
    <main className="flex h-screen min-h-[568px] bg-[#f0f0f0] pt-px font-[Roboto,'Open_Sans',sans-serif] text-[12px] leading-4 text-black">
      <ConsoleTree />
      <EditorWindow />
      <div className="flex w-[401px] shrink-0 flex-col bg-white pb-0.5">
        <div className="h-[45px] shrink-0 border-t-2 border-b border-t-[#707070] border-b-[#dadada] bg-linear-to-r from-[#e9e9e9] to-[#f0f0f0]" />
        <div className="mt-[26px] mb-[18px] h-[21px] shrink-0 border-y border-[#adadad] bg-[#e1e1e1]" />
        <ServiceDialog />
      </div>
    </main>
  );
}
